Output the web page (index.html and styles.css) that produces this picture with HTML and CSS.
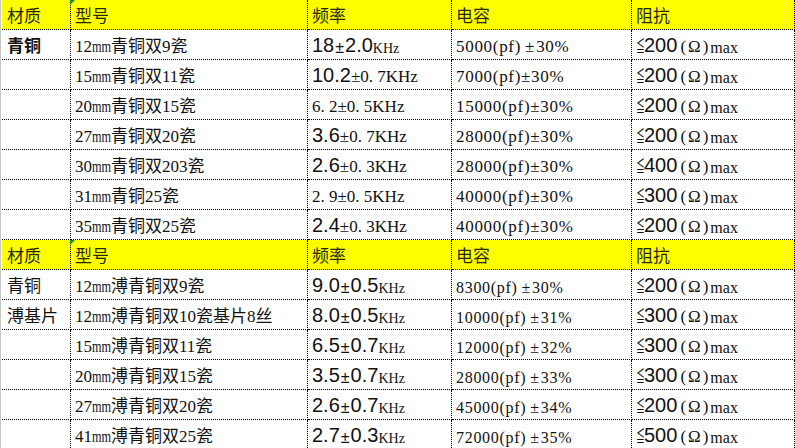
FILE: index.html
```html
<!DOCTYPE html>
<html lang="zh-CN">
<head>
<meta charset="utf-8">
<title>青铜规格表</title>
<link rel="stylesheet" href="styles.css">
</head>
<body>
<div class="sheet">
  <div class="row head">
    <div class="c">材质</div><div class="c note">型号</div><div class="c">频率</div><div class="c">电容</div><div class="c">阻抗</div>
  </div>
  <div class="row">
    <div class="c"><b class="bold">青铜</b></div>
    <div class="c">12<span class="mm">mm</span>青铜双9瓷</div>
    <div class="c"><span class="big">18</span><span class="pm">±</span><span class="big">2.0</span><span class="khz">KHz</span></div>
    <div class="c cap">5000(pf)<span class="pmw">±</span>30%</div>
    <div class="c"><span class="le">≦</span><span class="big">200</span><span class="om">(Ω)</span><span class="mx">max</span></div>
  </div>
  <div class="row">
    <div class="c"></div>
    <div class="c">15<span class="mm">mm</span>青铜双11瓷</div>
    <div class="c"><span class="big">10.2</span>±0. 7KHz</div>
    <div class="c cap">7000(pf)±30%</div>
    <div class="c"><span class="le">≦</span><span class="big">200</span><span class="om">(Ω)</span><span class="mx">max</span></div>
  </div>
  <div class="row">
    <div class="c"></div>
    <div class="c">20<span class="mm">mm</span>青铜双15瓷</div>
    <div class="c">6. 2±0. 5KHz</div>
    <div class="c cap">15000(pf)±30%</div>
    <div class="c"><span class="le">≦</span><span class="big">200</span><span class="om">(Ω)</span><span class="mx">max</span></div>
  </div>
  <div class="row">
    <div class="c"></div>
    <div class="c">27<span class="mm">mm</span>青铜双20瓷</div>
    <div class="c"><span class="big">3.6</span>±0. 7KHz</div>
    <div class="c cap">28000(pf)±30%</div>
    <div class="c"><span class="le">≦</span><span class="big">200</span><span class="om">(Ω)</span><span class="mx">max</span></div>
  </div>
  <div class="row">
    <div class="c"></div>
    <div class="c">30<span class="mm">mm</span>青铜双203瓷</div>
    <div class="c"><span class="big">2.6</span>±0. 3KHz</div>
    <div class="c cap">28000(pf)±30%</div>
    <div class="c"><span class="le">≦</span><span class="big">400</span><span class="om">(Ω)</span><span class="mx">max</span></div>
  </div>
  <div class="row">
    <div class="c"></div>
    <div class="c">31<span class="mm">mm</span>青铜25瓷</div>
    <div class="c">2. 9±0. 5KHz</div>
    <div class="c cap">40000(pf)±30%</div>
    <div class="c"><span class="le">≦</span><span class="big">300</span><span class="om">(Ω)</span><span class="mx">max</span></div>
  </div>
  <div class="row">
    <div class="c"></div>
    <div class="c">35<span class="mm">mm</span>青铜双25瓷</div>
    <div class="c"><span class="big">2.4</span>±0. 3KHz</div>
    <div class="c cap">40000(pf)±30%</div>
    <div class="c"><span class="le">≦</span><span class="big">200</span><span class="om">(Ω)</span><span class="mx">max</span></div>
  </div>
  <div class="row head">
    <div class="c">材质</div><div class="c note">型号</div><div class="c">频率</div><div class="c">电容</div><div class="c">阻抗</div>
  </div>
  <div class="row">
    <div class="c">青铜</div>
    <div class="c">12<span class="mm">mm</span>溥青铜双9瓷</div>
    <div class="c"><span class="big">9.0</span><span class="pm">±</span><span class="big">0.5</span><span class="khz">KHz</span></div>
    <div class="c cap sm">8300(pf)<span class="pmw">±</span>30%</div>
    <div class="c"><span class="le">≦</span><span class="big">200</span><span class="om">(Ω)</span><span class="mx">max</span></div>
  </div>
  <div class="row">
    <div class="c">溥基片</div>
    <div class="c">12<span class="mm">mm</span>溥青铜双10瓷基片8丝</div>
    <div class="c"><span class="big">8.0</span><span class="pm">±</span><span class="big">0.5</span><span class="khz">KHz</span></div>
    <div class="c cap sm">10000(pf)<span class="pmw">±</span>31%</div>
    <div class="c"><span class="le">≦</span><span class="big">300</span><span class="om">(Ω)</span><span class="mx">max</span></div>
  </div>
  <div class="row">
    <div class="c"></div>
    <div class="c">15<span class="mm">mm</span>溥青铜双11瓷</div>
    <div class="c"><span class="big">6.5</span><span class="pm">±</span><span class="big">0.7</span><span class="khz">KHz</span></div>
    <div class="c cap sm">12000(pf)<span class="pmw">±</span>32%</div>
    <div class="c"><span class="le">≦</span><span class="big">300</span><span class="om">(Ω)</span><span class="mx">max</span></div>
  </div>
  <div class="row">
    <div class="c"></div>
    <div class="c">20<span class="mm">mm</span>溥青铜双15瓷</div>
    <div class="c"><span class="big">3.5</span><span class="pm">±</span><span class="big">0.7</span><span class="khz">KHz</span></div>
    <div class="c cap sm">28000(pf)<span class="pmw">±</span>33%</div>
    <div class="c"><span class="le">≦</span><span class="big">300</span><span class="om">(Ω)</span><span class="mx">max</span></div>
  </div>
  <div class="row">
    <div class="c"></div>
    <div class="c">27<span class="mm">mm</span>溥青铜双20瓷</div>
    <div class="c"><span class="big">2.6</span><span class="pm">±</span><span class="big">0.7</span><span class="khz">KHz</span></div>
    <div class="c cap sm">45000(pf)<span class="pmw">±</span>34%</div>
    <div class="c"><span class="le">≦</span><span class="big">200</span><span class="om">(Ω)</span><span class="mx">max</span></div>
  </div>
  <div class="row">
    <div class="c"></div>
    <div class="c">41<span class="mm">mm</span>溥青铜双25瓷</div>
    <div class="c"><span class="big">2.7</span><span class="pm">±</span><span class="big">0.3</span><span class="khz">KHz</span></div>
    <div class="c cap sm">72000(pf)<span class="pmw">±</span>35%</div>
    <div class="c"><span class="le">≦</span><span class="big">500</span><span class="om">(Ω)</span><span class="mx">max</span></div>
  </div>
</div>
</body>
</html>
```

FILE: styles.css
```css
html, body {
  margin: 0;
  padding: 0;
  background: #fff;
}
body {
  overflow: hidden;
}
.sheet {
  border-left: 1px solid #c6c6c6;
  padding-left: 1px;
  font-family: "Liberation Serif", "Noto Sans CJK SC", serif;
  font-size: 17px;
  color: #111;
}
.row {
  display: grid;
  grid-template-columns: 69px 237px 144px 180px 163px;
  height: 30px;
}
.c {
  box-sizing: border-box;
  display: flex;
  align-items: flex-end;
  white-space: nowrap;
  padding: 0 0 2px 4px;
  border-right: 1px dotted #000;
  border-bottom: 1px dotted #000;
  position: relative;
}
.row .c:first-child {
  padding-left: 5px;
}
.head .c {
  background: #ffff00;
  color: #2a2a00;
}
.note::before {
  content: "";
  position: absolute;
  top: 0;
  left: -1px;
  border-top: 5px solid #1e8a1e;
  border-right: 5px solid transparent;
}
.bold {
  font-weight: 700;
}
.mm {
  display: inline-block;
  width: 19px;
  transform: scaleX(0.72);
  transform-origin: left bottom;
}
.big {
  font-family: "Liberation Sans", sans-serif;
  font-size: 20px;
  letter-spacing: 0;
}
.pm {
  font-family: "Liberation Sans", sans-serif;
  font-size: 16px;
  margin: 0 1px;
  letter-spacing: 0;
}
.khz {
  font-size: 14px;
}
.cap {
  letter-spacing: 0.7px;
}
.pmw {
  margin: 0 1px 0 4px;
}
.sm {
  font-size: 16px;
}
.le {
  font-family: "Noto Sans CJK SC", sans-serif;
  font-size: 16px;
  display: inline-block;
  width: 8px;
  transform: scaleX(0.55);
  transform-origin: left center;
}
.om {
  letter-spacing: 2px;
  margin-left: 3px;
}
.mx {
  font-size: 16px;
}
```
